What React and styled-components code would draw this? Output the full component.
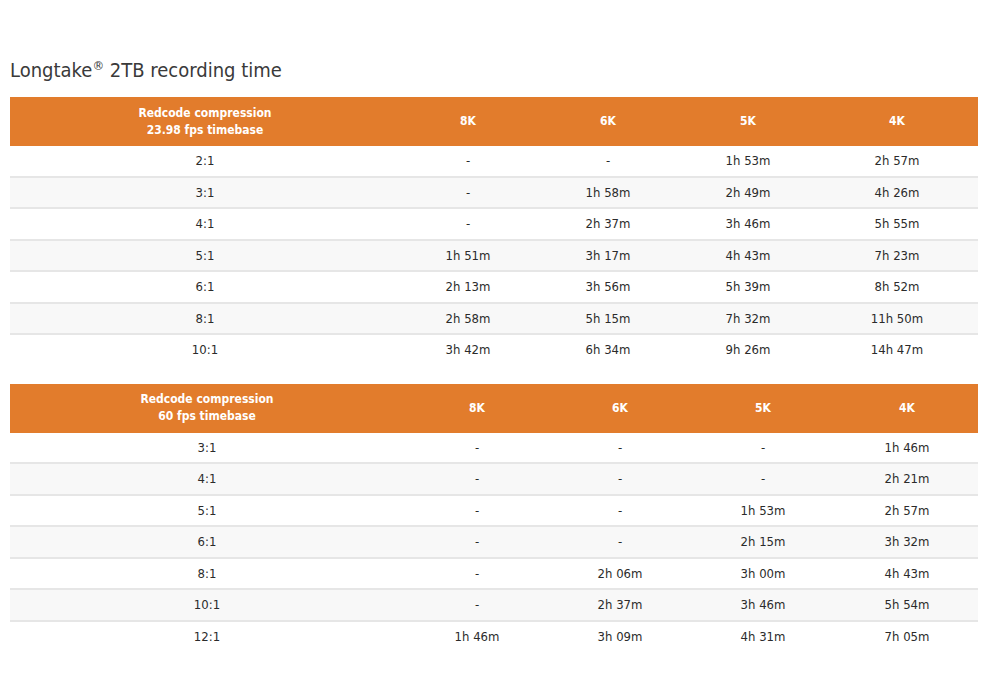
import React from 'react';
import styled, { createGlobalStyle } from 'styled-components';

const GlobalStyle = createGlobalStyle`
body {
  margin: 0;
  background: #ffffff;
  font-family: "DejaVu Sans Condensed", "DejaVu Sans", sans-serif;
  font-stretch: condensed;
  color: #333333;
}
`;

const Page = styled.div`
padding: 56px 22px 0 10px;
`;

const Title = styled.h2`
margin: 0 0 13px 0;
font-size: 20px;
font-weight: 400;
color: #3a3a3a;
line-height: 28px;
sup {
  font-size: 13px;
  vertical-align: 7px;
  line-height: 0;
}
`;

const Table = styled.table`
width: 100%;
border-collapse: collapse;
table-layout: fixed;
margin-bottom: 19px;
`;

const HeadCell = styled.th`
background: #e27c2c;
color: #ffffff;
font-weight: 700;
font-size: 12px;
line-height: 17px;
height: 49px;
padding: 0;
text-align: center;
`;

const Row = styled.tr`
background: ${({ shade }) => (shade ? '#f8f8f8' : '#ffffff')};
border-bottom: ${({ last }) => (last ? 'none' : '2px solid #e6e6e6')};
`;

const Cell = styled.td`
height: 29.5px;
padding: 0;
text-align: center;
font-size: 13px;
color: #2b2b2b;
`;

const tables = [
  {
    label: ['Redcode compression', '23.98 fps timebase'],
    cols: [390, 136, 144, 136, 162],
    rows: [
      ['2:1', '-', '-', '1h 53m', '2h 57m'],
      ['3:1', '-', '1h 58m', '2h 49m', '4h 26m'],
      ['4:1', '-', '2h 37m', '3h 46m', '5h 55m'],
      ['5:1', '1h 51m', '3h 17m', '4h 43m', '7h 23m'],
      ['6:1', '2h 13m', '3h 56m', '5h 39m', '8h 52m'],
      ['8:1', '2h 58m', '5h 15m', '7h 32m', '11h 50m'],
      ['10:1', '3h 42m', '6h 34m', '9h 26m', '14h 47m'],
    ],
  },
  {
    label: ['Redcode compression', '60 fps timebase'],
    cols: [394, 146, 140, 146, 142],
    rows: [
      ['3:1', '-', '-', '-', '1h 46m'],
      ['4:1', '-', '-', '-', '2h 21m'],
      ['5:1', '-', '-', '1h 53m', '2h 57m'],
      ['6:1', '-', '-', '2h 15m', '3h 32m'],
      ['8:1', '-', '2h 06m', '3h 00m', '4h 43m'],
      ['10:1', '-', '2h 37m', '3h 46m', '5h 54m'],
      ['12:1', '1h 46m', '3h 09m', '4h 31m', '7h 05m'],
    ],
  },
];

const RecordingTable = ({ data }) => (
  <Table>
    <colgroup>
      {data.cols.map((w, i) => (
        <col key={i} style={{ width: w }} />
      ))}
    </colgroup>
    <thead>
      <tr>
        <HeadCell>
          {data.label[0]}
          <br />
          {data.label[1]}
        </HeadCell>
        <HeadCell>8K</HeadCell>
        <HeadCell>6K</HeadCell>
        <HeadCell>5K</HeadCell>
        <HeadCell>4K</HeadCell>
      </tr>
    </thead>
    <tbody>
      {data.rows.map((r, i) => (
        <Row key={i} shade={i % 2 === 1} last={i === data.rows.length - 1}>
          {r.map((c, j) => (
            <Cell key={j}>{c}</Cell>
          ))}
        </Row>
      ))}
    </tbody>
  </Table>
);

export default function App() {
  return (
    <>
      <GlobalStyle />
      <Page>
        <Title>
          Longtake<sup>®</sup> 2TB recording time
        </Title>
        {tables.map((t, i) => (
          <RecordingTable key={i} data={t} />
        ))}
      </Page>
    </>
  );
}
